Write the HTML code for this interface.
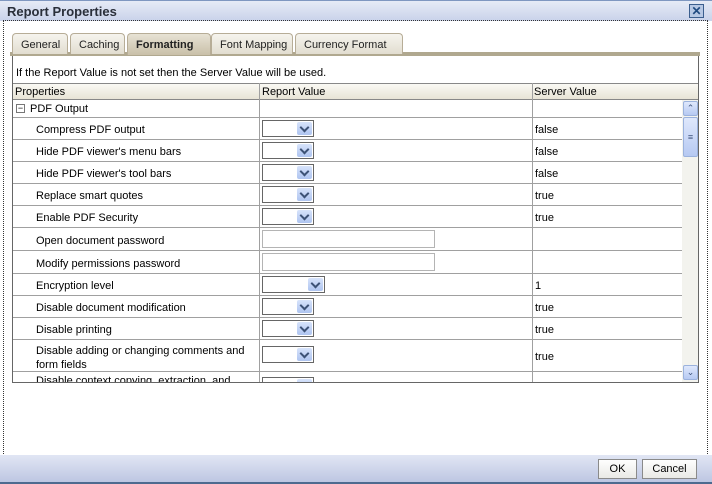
<!DOCTYPE html><html><head><style>
*{margin:0;padding:0;box-sizing:border-box}
body{width:712px;height:484px;position:relative;overflow:hidden;background:#fff;font-family:"Liberation Sans",Tahoma,sans-serif;font-size:11px;color:#000}
.a{position:absolute}
.title{left:0;top:0;width:712px;height:21px;background:linear-gradient(#e6ebf6,#c9d2ea);border-top:1px solid #7f97c0}
.title span{position:absolute;left:7px;top:3px;font-weight:bold;font-size:13px;color:#2a2f3a}
.close{left:689px;top:4px;width:15px;height:14px;background:#b7c8e4;border:1px solid #3b5e8e;color:#1f4a80;font-size:12px;line-height:12px;text-align:center;font-weight:bold}
.frame{left:3px;top:20px;width:705px;height:436px;border:1px dotted #333}
.tab{top:33px;height:21px;background:linear-gradient(#f6f4ee,#e2ddd0);border:1px solid #b7ad97;border-bottom:none;border-radius:4px 4px 0 0;padding:5px 0 0 8px;font-size:11px;color:#222}
.strip{left:10px;top:52px;width:690px;height:4px;background:#b0a88f}
.panel{left:12px;top:56px;width:687px;height:327px;border:1px solid #666;border-top:none}
.hdr{left:13px;top:83px;width:685px;height:17px;background:linear-gradient(#faf9f4,#e8e4d6);border-top:1px solid #888;border-bottom:1px solid #888}
.h{position:absolute;top:2px;font-size:11px}
.hl{position:absolute;height:1px;background:#a0a0a0;left:13px;width:669px}
.vl{position:absolute;width:1px;background:#a0a0a0}
.lbl{position:absolute;left:36px;font-size:11px;padding-top:2px}
.sv{position:absolute;left:535px;font-size:11px;padding-top:2px}
.sel{position:absolute;left:262px;width:52px;height:17px;border:1px solid #666;background:#fff}
.sel i{position:absolute;right:1px;top:1px;width:15px;height:13px;background:linear-gradient(#d7e3fb,#aec4f0);border-radius:2px}
.sel i:after{content:"";position:absolute;left:4px;top:2px;width:5px;height:5px;border-right:2px solid #3d5276;border-bottom:2px solid #3d5276;transform:rotate(45deg)}
.inp{position:absolute;left:262px;width:173px;height:18px;border:1px solid #b4b4b4;background:#fff}
.sb{left:682px;top:100px;width:16px;height:282px;background:#f3f3ee}
.sbb{position:absolute;left:1px;width:15px;height:15px;background:linear-gradient(#dfe8fc,#b6c9f2);border:1px solid #9bb2dd;border-radius:2px;font-size:9px;color:#40557d;text-align:center;line-height:12px}
.foot{left:0;top:455px;width:712px;height:29px;background:linear-gradient(#e1e6f4,#bdc6e2);border-bottom:2px solid #4d6a8f}
.btn{top:459px;height:20px;background:linear-gradient(#fefefe,#e9e9e6);border:1px solid #8a8a8a;text-align:center;font-size:11px;line-height:18px}
</style></head><body>
<div class="a title"><span>Report Properties</span></div>
<div class="a close">✕</div>
<div class="a frame"></div>
<div class="a strip"></div>
<div class="a tab" style="left:12px;width:56px">General</div>
<div class="a tab" style="left:70px;width:55px">Caching</div>
<div class="a tab" style="left:127px;width:84px;background:linear-gradient(#e7e2d4,#c9c0a9);font-weight:bold;height:22px">Formatting</div>
<div class="a tab" style="left:211px;width:82px">Font Mapping</div>
<div class="a tab" style="left:295px;width:108px">Currency Format</div>
<div class="a panel"></div>
<div class="a" style="left:16px;top:67px">If the Report Value is not set then the Server Value will be used.</div>
<div class="a hdr"><span class="h" style="left:2px">Properties</span><span class="h" style="left:249px">Report Value</span><span class="h" style="left:521px">Server Value</span></div>
<div class="vl" style="left:259px;top:83px;height:299px"></div>
<div class="vl" style="left:532px;top:83px;height:299px"></div>
<div class="hl" style="top:117px"></div><div class="hl" style="top:139px"></div><div class="hl" style="top:161px"></div><div class="hl" style="top:183px"></div><div class="hl" style="top:205px"></div><div class="hl" style="top:227px"></div><div class="hl" style="top:250px"></div><div class="hl" style="top:273px"></div><div class="hl" style="top:295px"></div><div class="hl" style="top:317px"></div><div class="hl" style="top:339px"></div><div class="hl" style="top:371px"></div>
<div class="a" style="left:16px;top:104px;width:9px;height:9px;border:1px solid #777;font-size:9px;line-height:6px;text-align:center">−</div>
<div class="a" style="left:30px;top:103px">PDF Output</div>
<div class="lbl" style="top:122px">Compress PDF output</div><div class="sel" style="top:120px"><i></i></div><div class="sv" style="top:122px">false</div>
<div class="lbl" style="top:144px">Hide PDF viewer's menu bars</div><div class="sel" style="top:142px"><i></i></div><div class="sv" style="top:144px">false</div>
<div class="lbl" style="top:166px">Hide PDF viewer's tool bars</div><div class="sel" style="top:164px"><i></i></div><div class="sv" style="top:166px">false</div>
<div class="lbl" style="top:188px">Replace smart quotes</div><div class="sel" style="top:186px"><i></i></div><div class="sv" style="top:188px">true</div>
<div class="lbl" style="top:210px">Enable PDF Security</div><div class="sel" style="top:208px"><i></i></div><div class="sv" style="top:210px">true</div>
<div class="lbl" style="top:233px">Open document password</div><div class="inp" style="top:230px"></div>
<div class="lbl" style="top:256px">Modify permissions password</div><div class="inp" style="top:253px"></div>
<div class="lbl" style="top:278px">Encryption level</div><div class="sel" style="top:276px;width:63px"><i></i></div><div class="sv" style="top:278px">1</div>
<div class="lbl" style="top:300px">Disable document modification</div><div class="sel" style="top:298px"><i></i></div><div class="sv" style="top:300px">true</div>
<div class="lbl" style="top:322px">Disable printing</div><div class="sel" style="top:320px"><i></i></div><div class="sv" style="top:322px">true</div>
<div class="lbl" style="top:342px;line-height:14px">Disable adding or changing comments and<br>form fields</div><div class="sel" style="top:346px"><i></i></div><div class="sv" style="top:349px">true</div>
<div class="a" style="left:13px;top:372px;width:669px;height:10px;overflow:hidden"><div class="lbl" style="left:23px;top:1px">Disable context copying, extraction, and</div><div class="sel" style="left:249px;top:5px"><i></i></div></div>
<div class="a sb"><div class="sbb" style="top:1px">⌃</div><div class="sbb" style="top:17px;height:40px;line-height:38px">≡</div><div class="sbb" style="top:265px">⌄</div></div>
<div class="a foot"></div>
<div class="a btn" style="left:598px;width:39px">OK</div>
<div class="a btn" style="left:642px;width:55px">Cancel</div>
</body></html>
